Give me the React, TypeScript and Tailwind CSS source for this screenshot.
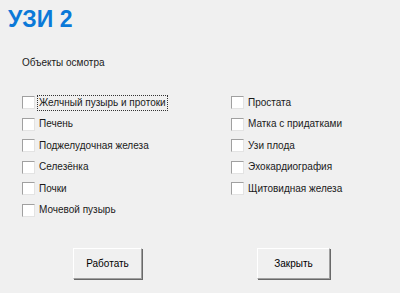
import React, { useState } from "react";

const leftItems = [
  "Желчный пузырь и протоки",
  "Печень",
  "Поджелудочная железа",
  "Селезёнка",
  "Почки",
  "Мочевой пузырь",
];

const rightItems = ["Простата", "Матка с придатками", "Узи плода", "Эхокардиография", "Щитовидная железа"];

function Check({ label, focused }: { label: string; focused?: boolean }) {
  const [checked, setChecked] = useState(false);
  return (
    <label className="flex h-[21.5px] cursor-default items-center" onClick={() => setChecked(!checked)}>
      <span className="flex h-[13px] w-[13px] shrink-0 items-center justify-center border border-t-[#a0a0a0] border-l-[#a0a0a0] border-b-[#e3e3e3] border-r-[#e3e3e3] bg-white">
        {checked ? <span className="text-[10px] leading-none">✓</span> : null}
      </span>
      <span
        className={`ml-[3px] px-[1px] leading-[14px] ${focused ? "outline outline-1 outline-dotted outline-[#333]" : ""}`}
      >
        {label}
      </span>
    </label>
  );
}

function WinButton({ children, className = "" }: { children: React.ReactNode; className?: string }) {
  return (
    <button
      type="button"
      className={`h-[31px] border border-t-white border-l-white border-b-[#a0a0a0] border-r-[#a0a0a0] bg-[#f0f0f0] text-[10px] text-black shadow-[1px_1px_0_#696969] ${className}`}
    >
      {children}
    </button>
  );
}

export default function App() {
  return (
    <div
      className="h-[293px] w-[400px] overflow-hidden bg-[#f0f0f0] text-[10px] text-[#1a1a1a]"
      style={{ fontFamily: '"Liberation Sans", Arial, sans-serif' }}
    >
      <div className="pl-[8px] pt-[6px] text-[23px] font-bold leading-[26px] text-[#0b79d8]">УЗИ 2</div>
      <div className="pl-[22px] pt-[24px] leading-[14px]">Объекты осмотра</div>
      <div className="grid grid-cols-[209px_1fr] pl-[22px] pt-[22px]">
        <div className="flex flex-col">
          {leftItems.map((t, i) => (
            <Check key={t} label={t} focused={i === 0} />
          ))}
        </div>
        <div className="flex flex-col">
          {rightItems.map((t) => (
            <Check key={t} label={t} />
          ))}
        </div>
      </div>
      <div className="flex pl-[73px] pt-[27px]">
        <WinButton className="w-[69px]">Работать</WinButton>
        <WinButton className="ml-[115px] w-[73px]">Закрыть</WinButton>
      </div>
    </div>
  );
}
